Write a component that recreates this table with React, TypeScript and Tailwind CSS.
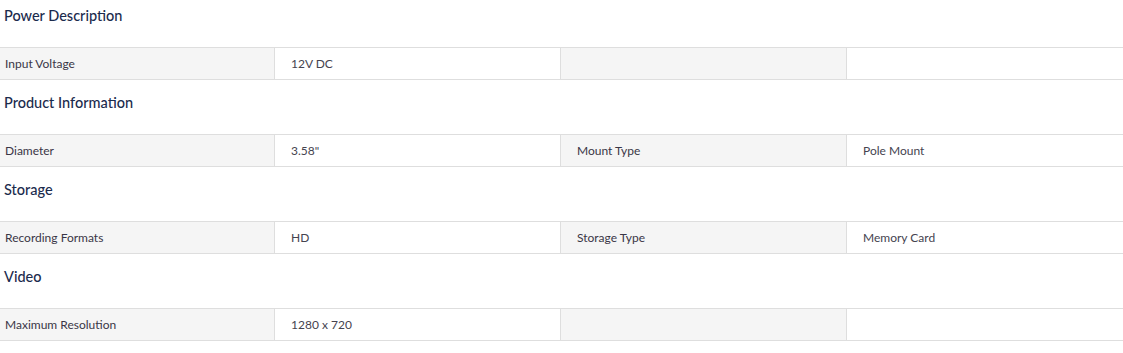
type Spec = { label: string; value: string };

type Section = {
  title: string;
  rows: [Spec, Spec | null][];
};

const sections: Section[] = [
  {
    title: 'Power Description',
    rows: [[{ label: 'Input Voltage', value: '12V DC' }, null]],
  },
  {
    title: 'Product Information',
    rows: [[{ label: 'Diameter', value: '3.58"' }, { label: 'Mount Type', value: 'Pole Mount' }]],
  },
  {
    title: 'Storage',
    rows: [[{ label: 'Recording Formats', value: 'HD' }, { label: 'Storage Type', value: 'Memory Card' }]],
  },
  {
    title: 'Video',
    rows: [[{ label: 'Maximum Resolution', value: '1280 x 720' }, null]],
  },
];

function SpecRow({ left, right }: { left: Spec; right: Spec | null }) {
  return (
    <div className="grid grid-cols-[275px_286px_286px_1fr] border-y border-[#dedede] h-[33px] text-[12px] leading-none">
      <div className="bg-[#f5f5f5] border-r border-[#dedede] flex items-center pl-[5px] text-[#3a3646]">{left.label}</div>
      <div className="bg-white border-r border-[#dedede] flex items-center pl-4 text-[#45434f]">{left.value}</div>
      <div className="bg-[#f5f5f5] border-r border-[#dedede] flex items-center pl-4 text-[#3a3646]">{right?.label}</div>
      <div className="bg-white flex items-center pl-4 text-[#45434f]">{right?.value}</div>
    </div>
  );
}

export default function App() {
  return (
    <div className="w-[1123px] h-[353px] bg-white font-['Lato','Open_Sans',sans-serif]">
      {sections.map((section, i) => (
        <div key={section.title} className={i > 0 ? 'mt-[7px]' : ''}>
          <h3 className="h-[47px] pl-1 leading-[31px] text-[14.5px] font-medium text-[#1b2b4d]">{section.title}</h3>
          {section.rows.map(([left, right], j) => (
            <SpecRow key={j} left={left} right={right} />
          ))}
        </div>
      ))}
    </div>
  );
}
